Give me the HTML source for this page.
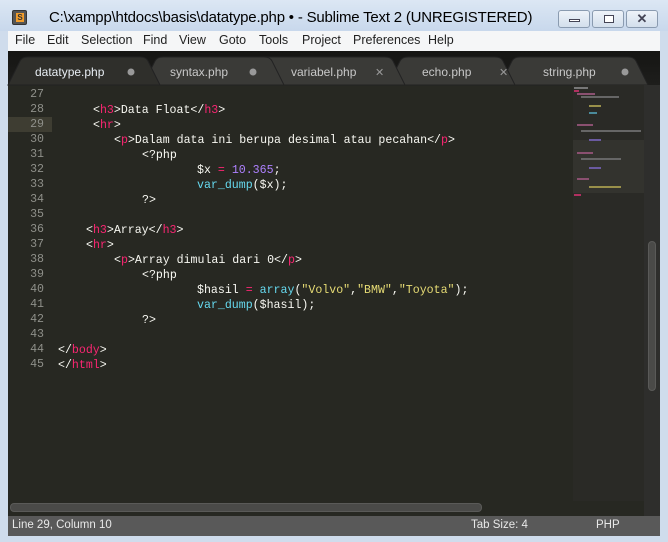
<!DOCTYPE html>
<html><head><meta charset="utf-8"><style>
*{margin:0;padding:0;box-sizing:border-box}
body{width:668px;height:542px;overflow:hidden;background:#cfdcec;font-family:"Liberation Sans",sans-serif;position:relative}
.abs{position:absolute}
.title{left:0;top:0;width:668px;height:31px;background:linear-gradient(#dce7f4,#c8d8ec)}
.title span{position:absolute;left:49px;top:9px;font-size:15px;color:#000;white-space:nowrap;letter-spacing:-0.2px}
.btn{top:10px;height:18px;border:1px solid #8a9bb0;border-radius:3px;background:linear-gradient(#eef3f9,#d3dfec)}
.menu{left:8px;top:31px;width:652px;height:20px;background:#f5f6f7;font-size:12.5px;color:#222}
.menu span{position:absolute;top:2px}
.ed{left:8px;top:51px;width:652px;height:465px;background:#272822}
.tabbar{left:8px;top:51px;width:652px;height:34px;background:linear-gradient(#151513,#1e1e1c)}
.code{font-family:"Liberation Mono",monospace;font-size:11.6px;color:#f8f8f2;white-space:pre}
.ln{position:absolute;left:0;width:36px;text-align:right;color:#8f908a;font-family:"Liberation Mono",monospace;font-size:11.6px}
.t{color:#f92672}.n{color:#ae81ff}.s{color:#e6db74}.f{color:#66d9ef}
.status{left:8px;top:516px;width:652px;height:20px;background:#595959;color:#e8e8e8;font-size:11.5px}
.mm{position:absolute;height:2px}
</style></head><body>
<div class="abs title"><span>C:\xampp\htdocs\basis\datatype.php • - Sublime Text 2 (UNREGISTERED)</span></div>
<div class="abs" style="left:12px;top:10px;width:15px;height:15px;background:#555;border:1px solid #333;border-radius:2px"><div style="position:absolute;left:3px;top:2px;width:8px;height:9px;background:#f29d2b;color:#333;font-size:8px;line-height:9px;text-align:center;font-weight:bold">S</div></div>
<div class="abs btn" style="left:558px;width:32px"><div class="abs" style="left:10px;top:8px;width:11px;height:3px;border:1px solid #445;background:#fff"></div></div>
<div class="abs btn" style="left:592px;width:32px"><div class="abs" style="left:11px;top:4px;width:10px;height:8px;border:1px solid #445;background:#fff"></div></div>
<div class="abs btn" style="left:626px;width:32px;font-size:13px;color:#445;text-align:center;line-height:16px;font-weight:bold">✕</div>
<div class="abs menu">
<span style="left:7px">File</span><span style="left:39px">Edit</span><span style="left:73px">Selection</span><span style="left:135px">Find</span><span style="left:171px">View</span><span style="left:211px">Goto</span><span style="left:251px">Tools</span><span style="left:294px">Project</span><span style="left:345px">Preferences</span><span style="left:420px">Help</span>
</div>
<div class="abs ed"></div>
<div class="abs tabbar"></div>
<svg class="abs" style="left:0;top:51px" width="668" height="36">
<g fill="#3a3a37" stroke="#222" stroke-width="1">
<path d="M500 34 L512 10 Q514 6 520 6 L628 6 Q634 6 636 10 L648 34 Z"/>
<path d="M388 34 L400 10 Q402 6 408 6 L495 6 Q501 6 503 10 L515 34 Z"/>
<path d="M238 34 L250 10 Q252 6 258 6 L385 6 Q391 6 393 10 L405 34 Z"/>
<path d="M143 34 L155 10 Q157 6 163 6 L264 6 Q270 6 272 10 L284 34 Z"/>
</g>
<path d="M8 34 L20 10 Q22 6 28 6 L140 6 Q146 6 148 10 L160 34 Z" fill="#2f2f2b" stroke="#222"/>
<g font-family="Liberation Sans" font-size="12">
<text x="35" y="25" fill="#e8eef4">datatype.php</text>
<text x="170" y="25" fill="#c8c8c8">syntax.php</text>
<text x="291" y="25" fill="#c8c8c8">variabel.php</text>
<text x="422" y="25" fill="#c8c8c8">echo.php</text>
<text x="543" y="25" fill="#c8c8c8">string.php</text>
<text x="375" y="25" fill="#999" font-size="11">✕</text>
<text x="499" y="25" fill="#999" font-size="11">✕</text>
</g>
<circle cx="131" cy="21" r="3.5" fill="#999"/><circle cx="253" cy="21" r="3.5" fill="#999"/><circle cx="625" cy="21" r="3.5" fill="#999"/>
</svg>
<div class="abs" style="left:8px;top:117px;width:44px;height:15px;background:#3e3d32"></div>
<div class="abs" style="left:644px;top:85px;width:16px;height:431px;background:#2e2e2c"></div>
<div class="abs" style="left:648px;top:241px;width:8px;height:150px;background:#4a4a48;border-radius:4px;border:1px solid #5a5a58"></div>
<div class="abs" style="left:573px;top:85px;width:71px;height:416px;background:#2a2a26"></div>
<div class="abs" style="left:573px;top:140px;width:71px;height:53px;background:#33332e"></div>
<div class="abs" style="left:0;top:0">
<div class="mm" style="left:574px;top:87px;width:14px;background:#777"></div>
<div class="mm" style="left:574px;top:90px;width:5px;background:#b03060"></div>
<div class="mm" style="left:577px;top:93px;width:18px;background:#8a5070"></div>
<div class="mm" style="left:581px;top:96px;width:38px;background:#666"></div>
<div class="mm" style="left:589px;top:105px;width:12px;background:#99904a"></div>
<div class="mm" style="left:589px;top:112px;width:8px;background:#4a8a9a"></div>
<div class="mm" style="left:577px;top:124px;width:16px;background:#8a5070"></div>
<div class="mm" style="left:581px;top:130px;width:60px;background:#666"></div>
<div class="mm" style="left:589px;top:139px;width:12px;background:#6a5aa0"></div>
<div class="mm" style="left:577px;top:152px;width:16px;background:#8a5070"></div>
<div class="mm" style="left:581px;top:158px;width:40px;background:#666"></div>
<div class="mm" style="left:589px;top:167px;width:12px;background:#6a5aa0"></div>
<div class="mm" style="left:577px;top:178px;width:12px;background:#8a5070"></div>
<div class="mm" style="left:589px;top:186px;width:32px;background:#99904a"></div>
<div class="mm" style="left:574px;top:194px;width:7px;background:#b03060"></div>
</div>
<div class="abs" style="left:8px;top:85px;width:565px;height:300px">
<div class="ln" style="top:3px">27</div><div class="ln" style="top:18px">28</div><div class="ln" style="top:33px">29</div><div class="ln" style="top:48px">30</div><div class="ln" style="top:63px">31</div><div class="ln" style="top:78px">32</div><div class="ln" style="top:93px">33</div><div class="ln" style="top:108px">34</div><div class="ln" style="top:123px">35</div><div class="ln" style="top:138px">36</div><div class="ln" style="top:153px">37</div><div class="ln" style="top:168px">38</div><div class="ln" style="top:183px">39</div><div class="ln" style="top:198px">40</div><div class="ln" style="top:213px">41</div><div class="ln" style="top:228px">42</div><div class="ln" style="top:243px">43</div><div class="ln" style="top:258px">44</div><div class="ln" style="top:273px">45</div>
</div>
<div class="abs code" style="left:0;top:1px">
<div class="abs" style="left:93px;top:103px">&lt;<span class="t">h3</span>&gt;Data Float&lt;/<span class="t">h3</span>&gt;</div>
<div class="abs" style="left:93px;top:118px">&lt;<span class="t">hr</span>&gt;</div>
<div class="abs" style="left:114px;top:133px">&lt;<span class="t">p</span>&gt;Dalam data ini berupa desimal atau pecahan&lt;/<span class="t">p</span>&gt;</div>
<div class="abs" style="left:142px;top:148px">&lt;?php</div>
<div class="abs" style="left:197px;top:163px">$x <span class="t">=</span> <span class="n">10.365</span>;</div>
<div class="abs" style="left:197px;top:178px"><span class="f">var_dump</span>($x);</div>
<div class="abs" style="left:142px;top:193px">?&gt;</div>
<div class="abs" style="left:86px;top:223px">&lt;<span class="t">h3</span>&gt;Array&lt;/<span class="t">h3</span>&gt;</div>
<div class="abs" style="left:86px;top:238px">&lt;<span class="t">hr</span>&gt;</div>
<div class="abs" style="left:114px;top:253px">&lt;<span class="t">p</span>&gt;Array dimulai dari 0&lt;/<span class="t">p</span>&gt;</div>
<div class="abs" style="left:142px;top:268px">&lt;?php</div>
<div class="abs" style="left:197px;top:283px">$hasil <span class="t">=</span> <span class="f">array</span>(<span class="s">"Volvo"</span>,<span class="s">"BMW"</span>,<span class="s">"Toyota"</span>);</div>
<div class="abs" style="left:197px;top:298px"><span class="f">var_dump</span>($hasil);</div>
<div class="abs" style="left:142px;top:313px">?&gt;</div>
<div class="abs" style="left:58px;top:343px">&lt;/<span class="t">body</span>&gt;</div>
<div class="abs" style="left:58px;top:358px">&lt;/<span class="t">html</span>&gt;</div>
</div>
<div class="abs" style="left:10px;top:503px;width:472px;height:9px;background:#4a4a48;border-radius:4px;border:1px solid #5a5a58;z-index:5"></div>
<div class="abs status"><span class="abs" style="left:4px;top:3px">Line 29, Column 10</span><span class="abs" style="left:463px;top:3px">Tab Size: 4</span><span class="abs" style="left:588px;top:3px">PHP</span></div>
</body></html>
